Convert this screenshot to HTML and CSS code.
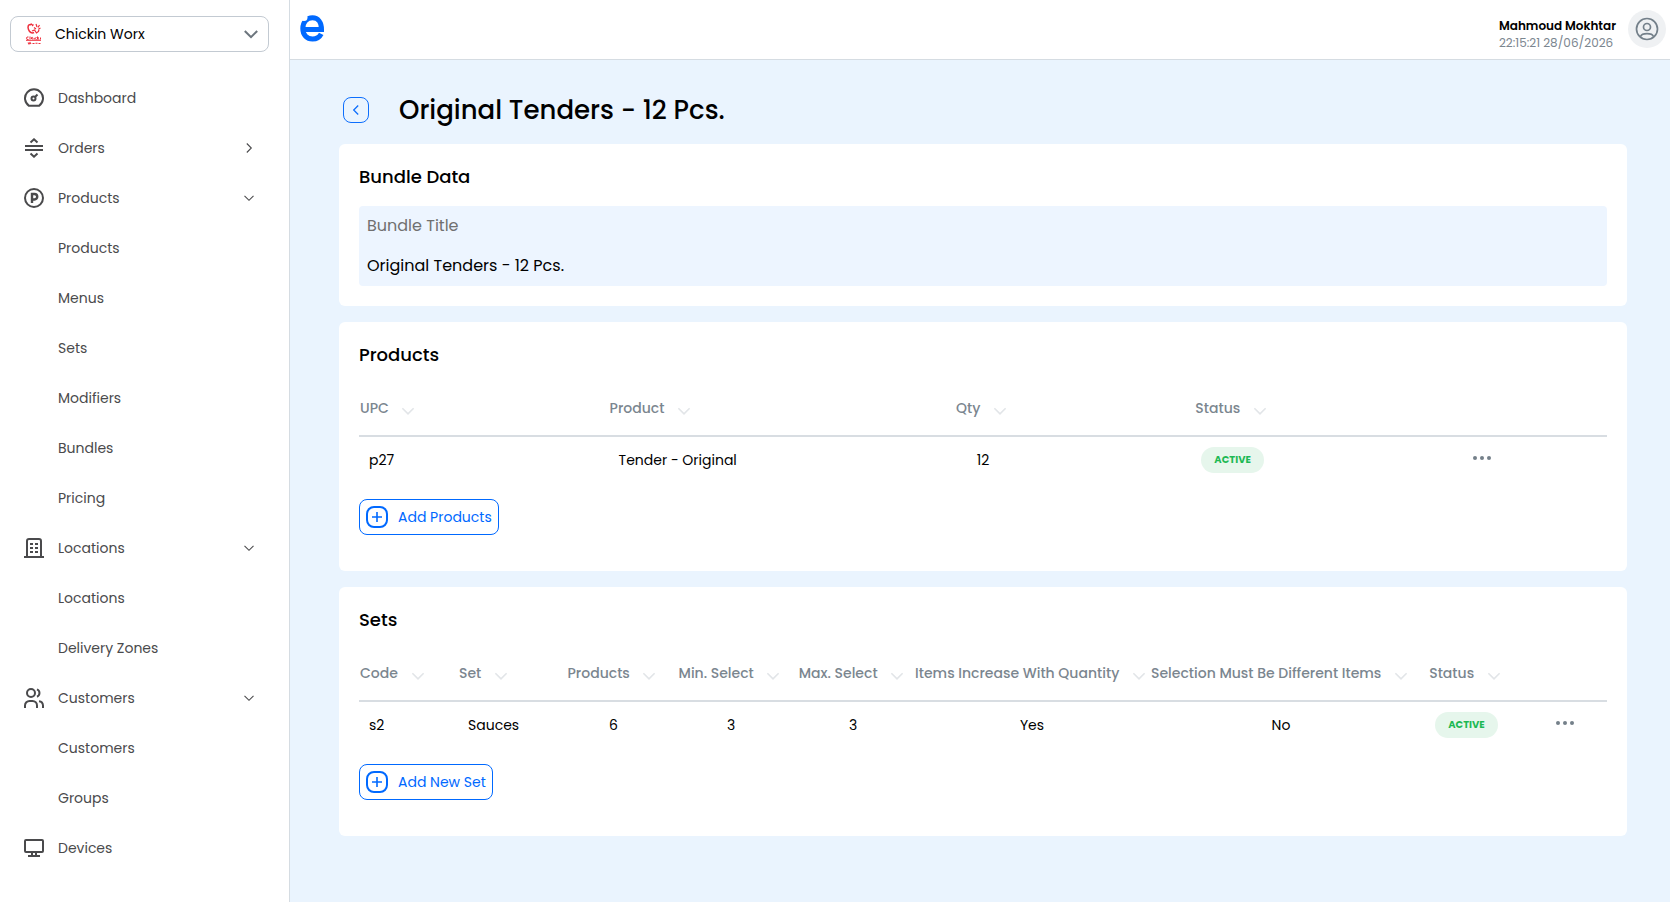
FILE: index.html
```html
<!DOCTYPE html>
<html lang="en">
<head>
  <meta charset="UTF-8">
  <meta name="viewport" content="width=device-width, initial-scale=1.0">
  <title>Original Tenders - 12 Pcs.</title>
  <link rel="stylesheet" href="styles.css">
</head>
<body>
  <svg class="sprite" aria-hidden="true">
    <symbol id="chevron" viewBox="0 0 16 16"><path d="M3.500 5.800 8 10.300 12.500 5.800"/></symbol>
    <symbol id="dots" viewBox="0 0 20 6"><circle cx="3" cy="3" r="2"/><circle cx="10" cy="3" r="2"/><circle cx="17" cy="3" r="2"/></symbol>
    <symbol id="plus" viewBox="0 0 22 22"><rect x="1" y="1" width="20" height="20" rx="7" stroke-width="2"/><path d="M11 6v10M6 11h10" stroke-width="1.6"/></symbol>
  </svg>

  <div class="app">
    <aside class="sidebar">
      <div class="brand-select">
        <svg class="brand-logo" viewBox="0 0 18 22" aria-hidden="true">
          <path d="M6 1.500C3 1 2.500 4 3.500 6.500C4.500 9.500 7 10.500 9 9.500" stroke-width="1.500"/>
          <path d="M5 2l1.500-1 1 1.500 1-1M7 8l2.500-1 2 3 2-1.500.5-2M9 4.500l2 1.500M11 1l1 3M14.500 2l-1.500 2.500M15.500 5l-2 1" stroke-width="1.200"/>
          <path d="M3.500 14q-2-.5-2 1.200t2 1.300M5 13.500v3M6.500 16v-1.500q1.200-.8 1.200 1v1M9.200 14.800v1.800M11.500 14.500q-1.300 0-1.200 1t1.300 1M12.500 13.500v3M14 14.500l-1.300 1 1.500 1M15.500 14.500v2M1 17.300h15" stroke-width="1"/>
          <path d="M3 19.500l1 1.500 1-1.500 1 1.500M7.500 20.500h2M10.500 20.300h2M13.500 20.500h2" stroke-width="1.100"/>
        </svg>
        <select class="brand-input" aria-label="Brand">
          <option>Chickin Worx</option>
        </select>
        <svg class="brand-arrow" aria-hidden="true"><use href="#chevron"/></svg>
      </div>

      <nav class="menu">
        <a class="menu-item" href="#">
          <svg class="icon" viewBox="0 0 20 20"><path d="M5 17.800A9 9 0 1 1 15 17.800Z" /><circle cx="9.500" cy="10.500" r="2"/><path d="M11 9 13.500 6.500"/></svg>
          <span>Dashboard</span>
        </a>
        <a class="menu-item" href="#">
          <svg class="icon" viewBox="0 0 20 20"><path d="M1 8h18M1 12h18M6.500 4.500 10 1.300l3.500 3.200M6.500 15.500 10 18.700l3.500-3.200"/></svg>
          <span>Orders</span>
          <svg class="caret caret-right"><use href="#chevron"/></svg>
        </a>
        <a class="menu-item" href="#">
          <svg class="icon" viewBox="0 0 20 20"><circle cx="10" cy="10" r="9"/><path d="M8 15V6h2.500a2.500 2.500 0 0 1 0 5.500H8" stroke-width="2.400"/></svg>
          <span>Products</span>
          <svg class="caret"><use href="#chevron"/></svg>
        </a>
        <a class="menu-item sub" href="#">Products</a>
        <a class="menu-item sub" href="#">Menus</a>
        <a class="menu-item sub" href="#">Sets</a>
        <a class="menu-item sub" href="#">Modifiers</a>
        <a class="menu-item sub" href="#">Bundles</a>
        <a class="menu-item sub" href="#">Pricing</a>
        <a class="menu-item" href="#">
          <svg class="icon" viewBox="0 0 20 20"><path d="M0 19h20M3 19V3a2 2 0 0 1 2-2h10a2 2 0 0 1 2 2v16M6 6h3M11 6h3M6 10h3M11 10h3M6 14h3M11 14h3"/></svg>
          <span>Locations</span>
          <svg class="caret"><use href="#chevron"/></svg>
        </a>
        <a class="menu-item sub" href="#">Locations</a>
        <a class="menu-item sub" href="#">Delivery Zones</a>
        <a class="menu-item" href="#">
          <svg class="icon" viewBox="0 0 20 20"><circle cx="7" cy="5" r="4"/><path d="M1 20v-2.500A4.500 4.500 0 0 1 5.500 13h3a4.500 4.500 0 0 1 4.500 4.500V20M13 1.300a4 4 0 0 1 0 7.400M15 13.200a4.500 4.500 0 0 1 4 4.300V20"/></svg>
          <span>Customers</span>
          <svg class="caret"><use href="#chevron"/></svg>
        </a>
        <a class="menu-item sub" href="#">Customers</a>
        <a class="menu-item sub" href="#">Groups</a>
        <a class="menu-item" href="#">
          <svg class="icon" viewBox="0 0 20 20"><rect x="1" y="2" width="18" height="12" rx="1"/><path d="M8 14v4M12 14v4M4 18h12"/></svg>
          <span>Devices</span>
        </a>
      </nav>
    </aside>

    <div class="page">
      <header class="topbar">
        <svg class="logo" viewBox="0 0 24 27" role="img" aria-label="e">
          <path d="M3 14.500H21.500C21.500 7.500 18 2.800 12.500 2.800C6.500 2.800 2.800 7.500 2.800 13.500C2.800 20 7 24 12.500 24C16.500 24 19.500 22.200 21.200 18.800"/>
          <circle cx="4" cy="2.500" r="3.500"/>
        </svg>
        <div class="user">
          <div class="user-info">
            <div class="user-name">Mahmoud Mokhtar</div>
            <div class="user-time">22:15:21 28/06/2026</div>
          </div>
          <button class="avatar" aria-label="Account">
            <svg viewBox="0 0 24 24"><circle cx="12" cy="12" r="10.500"/><circle cx="12" cy="10" r="3.500"/><path d="M5.500 19.500C7 15.700 17 15.700 18.500 19.500"/></svg>
          </button>
        </div>
      </header>

      <main class="content">
        <div class="title-row">
          <button class="back" aria-label="Back"><svg class="back-arrow"><use href="#chevron"/></svg></button>
          <h1>Original Tenders - 12 Pcs.</h1>
        </div>

        <section class="card">
          <h2>Bundle Data</h2>
          <div class="field">
            <label for="bundle-title">Bundle Title</label>
            <input id="bundle-title" type="text" value="Original Tenders - 12 Pcs." readonly>
          </div>
        </section>

        <section class="card">
          <h2>Products</h2>
          <table>
            <thead>
              <tr>
                <th class="left">UPC <svg class="sort"><use href="#chevron"/></svg></th>
                <th class="left">Product <svg class="sort"><use href="#chevron"/></svg></th>
                <th>Qty <svg class="sort"><use href="#chevron"/></svg></th>
                <th>Status <svg class="sort"><use href="#chevron"/></svg></th>
                <th></th>
              </tr>
            </thead>
            <tbody>
              <tr>
                <td class="left">p27</td>
                <td class="left">Tender - Original</td>
                <td>12</td>
                <td><span class="badge">ACTIVE</span></td>
                <td><button class="more" aria-label="More"><svg><use href="#dots"/></svg></button></td>
              </tr>
            </tbody>
          </table>
          <button class="add"><svg><use href="#plus"/></svg>Add Products</button>
        </section>

        <section class="card">
          <h2>Sets</h2>
          <table>
            <colgroup>
              <col class="col-code"><col class="col-set"><col class="col-products"><col class="col-min"><col class="col-max">
              <col class="col-increase"><col class="col-different"><col class="col-status"><col class="col-more">
            </colgroup>
            <thead>
              <tr>
                <th class="left">Code <svg class="sort"><use href="#chevron"/></svg></th>
                <th class="left">Set <svg class="sort"><use href="#chevron"/></svg></th>
                <th>Products <svg class="sort"><use href="#chevron"/></svg></th>
                <th>Min. Select <svg class="sort"><use href="#chevron"/></svg></th>
                <th>Max. Select <svg class="sort"><use href="#chevron"/></svg></th>
                <th>Items Increase With Quantity <svg class="sort"><use href="#chevron"/></svg></th>
                <th>Selection Must Be Different Items <svg class="sort"><use href="#chevron"/></svg></th>
                <th>Status <svg class="sort"><use href="#chevron"/></svg></th>
                <th></th>
              </tr>
            </thead>
            <tbody>
              <tr>
                <td class="left">s2</td>
                <td class="left">Sauces</td>
                <td>6</td>
                <td>3</td>
                <td>3</td>
                <td>Yes</td>
                <td>No</td>
                <td><span class="badge">ACTIVE</span></td>
                <td><button class="more" aria-label="More"><svg><use href="#dots"/></svg></button></td>
              </tr>
            </tbody>
          </table>
          <button class="add"><svg><use href="#plus"/></svg>Add New Set</button>
        </section>
      </main>
    </div>
  </div>
</body>
</html>
```
FILE: styles.css
```css
* {
  box-sizing: border-box;
}

body {
  margin: 0;
  font-family: Poppins, Inter, sans-serif;
  font-size: 14px;
  color: #000;
  background: #eaf4fe;
}

button, input, select {
  font-family: inherit;
  color: inherit;
}

button {
  cursor: pointer;
}

svg {
  flex: none;
  fill: none;
  stroke: currentColor;
}

.sprite {
  display: none;
}

.app {
  display: flex;
  min-height: 100vh;
}

/* sidebar */
.sidebar {
  width: 290px;
  flex: none;
  background: #fff;
  border-right: 1px solid #d5dce2;
}

.brand-select {
  display: flex;
  align-items: center;
  height: 36px;
  margin: 16px 20px 0 10px;
  padding: 0 6px 0 14px;
  border: 1px solid #c3cad2;
  border-radius: 8px;
}

.brand-logo {
  width: 18px;
  height: 22px;
  color: #ee2f3c;
}

.brand-input {
  flex: 1;
  appearance: none;
  border: 0;
  background: none;
  padding: 0 0 0 12px;
  font-size: 14px;
}

.brand-arrow {
  width: 22px;
  height: 22px;
  color: #6c757d;
  stroke-width: 1.5;
}

.menu {
  padding-top: 21px;
}

.menu-item {
  display: flex;
  align-items: center;
  height: 50px;
  padding: 0 32px 0 24px;
  gap: 14px;
  font-size: 14px;
  color: #4a4a4c;
  text-decoration: none;
}

.menu-item.sub {
  padding-left: 58px;
}

.icon {
  width: 20px;
  height: 20px;
  stroke-width: 2;
}

.caret {
  width: 16px;
  height: 16px;
  margin-left: auto;
  stroke-width: 1.1;
}

.caret-right {
  transform: rotate(-90deg);
}

/* top bar */
.page {
  flex: 1;
  min-width: 0;
}

.topbar {
  display: flex;
  align-items: center;
  justify-content: space-between;
  height: 60px;
  padding: 0 4px 2px 10px;
  background: #fff;
  border-bottom: 1px solid #d5dce2;
}

.logo {
  width: 24px;
  height: 27px;
}

.logo path {
  stroke: #0069ff;
  stroke-width: 5;
}

.logo circle {
  fill: #fff;
  stroke: none;
}

.user {
  display: flex;
  align-items: center;
  gap: 12px;
}

.user-info {
  padding-top: 10px;
  line-height: 17px;
}

.user-name {
  font-size: 12px;
  font-weight: 600;
}

.user-time {
  font-size: 12px;
  color: #7b868f;
}

.avatar {
  display: flex;
  align-items: center;
  justify-content: center;
  width: 38px;
  height: 38px;
  padding: 0;
  border: 0;
  border-radius: 50%;
  background: #eff1f3;
  color: #74808a;
}

.avatar svg {
  width: 24px;
  height: 24px;
  stroke-width: 1.7;
}

/* content */
.content {
  padding: 32px 43px 32px 49px;
}

.title-row {
  display: flex;
  align-items: center;
  gap: 30px;
  height: 36px;
  margin-bottom: 16px;
  padding-left: 4px;
}

.back {
  display: flex;
  align-items: center;
  justify-content: center;
  width: 26px;
  height: 26px;
  padding: 0;
  border: 1px solid #0d6efd;
  border-radius: 8px;
  background: none;
  color: #0d6efd;
}

.back-arrow {
  width: 16px;
  height: 16px;
  stroke-width: 1.3;
  transform: rotate(90deg);
}

h1 {
  margin: 0;
  font-size: 26px;
  font-weight: 500;
}

h2 {
  margin: 0;
  font-size: 18px;
  font-weight: 500;
  line-height: 26px;
}

.card {
  margin-bottom: 16px;
  padding: 20px;
  border-radius: 6px;
  background: #fff;
}

.field {
  display: flex;
  flex-direction: column;
  margin-top: 16px;
  padding: 0 8px 2px;
  border-radius: 4px;
  background: #edf5ff;
  font-size: 16px;
}

.field label {
  line-height: 40px;
  color: #707070;
}

.field input {
  width: 100%;
  height: 38px;
  padding: 0;
  border: 0;
  outline: 0;
  background: none;
  font-size: 16px;
}

table {
  width: 100%;
  table-layout: fixed;
  border-collapse: collapse;
}

th, td {
  padding: 0;
  text-align: center;
  white-space: nowrap;
}

th {
  height: 68px;
  padding-top: 16px;
  border-bottom: 2px solid #d8dde2;
  font-size: 14px;
  font-weight: 500;
  color: #7b868f;
}

td {
  height: 47px;
}

th.left {
  text-align: left;
  padding-left: 1px;
}

td.left {
  text-align: left;
  padding-left: 10px;
}

.sort {
  width: 20px;
  height: 20px;
  margin-left: 6px;
  vertical-align: -8px;
  color: #e2e5e8;
  stroke-width: 1.3;
}

.badge {
  display: inline-block;
  padding: 0 13px;
  border-radius: 13px;
  background: #e6f6ec;
  color: #1db954;
  font-size: 10px;
  font-weight: 700;
  line-height: 26px;
}

.more {
  padding: 0 0 6px;
  border: 0;
  background: none;
  color: #74808a;
  vertical-align: middle;
}

.more svg {
  display: block;
  width: 20px;
  height: 6px;
  fill: currentColor;
  stroke: none;
}

.add {
  display: flex;
  align-items: center;
  gap: 10px;
  height: 36px;
  margin: 16px 0;
  padding: 0 6px;
  border: 1px solid #0069ff;
  border-radius: 8px;
  background: none;
  color: #0069ff;
  font-size: 14px;
}

.add svg {
  width: 22px;
  height: 22px;
}

.col-code {
  width: 99px;
}

.col-set {
  width: 100px;
}

.col-products, .col-status {
  width: 111px;
}

.col-min {
  width: 124px;
}

.col-max {
  width: 120px;
}

.col-increase {
  width: 238px;
}

.col-different {
  width: 260px;
}

.col-more {
  width: 85px;
}
```
